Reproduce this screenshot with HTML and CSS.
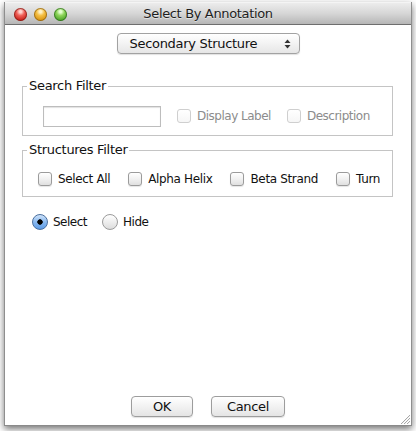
FILE: index.html
```html
<!DOCTYPE html>
<html>
<head>
<meta charset="utf-8">
<link rel="stylesheet" href="styles.css">
</head>
<body>
<div class="window">
  <div class="titlebar">
    <div class="lights">
      <span class="light red"></span>
      <span class="light yellow"></span>
      <span class="light green"></span>
    </div>
    <div class="title">Select By Annotation</div>
  </div>
  <div class="content">
    <div class="popup-row">
      <div class="popup">
        <span class="popup-text">Secondary Structure</span>
        <svg class="popup-arrows" width="7" height="10" viewBox="0 0 7 10">
          <path d="M3.5 0.5 L6.5 4 L0.5 4 Z" fill="#333"/>
          <path d="M0.5 6 L6.5 6 L3.5 9.5 Z" fill="#333"/>
        </svg>
      </div>
    </div>

    <fieldset class="group search">
      <legend>Search Filter</legend>
      <div class="row search-row">
        <div class="textfield"></div>
        <label class="check disabled"><span class="box"></span><span>Display Label</span></label>
        <label class="check disabled"><span class="box"></span><span>Description</span></label>
      </div>
    </fieldset>

    <fieldset class="group structures">
      <legend>Structures Filter</legend>
      <div class="row struct-row">
        <label class="check"><span class="box"></span><span>Select All</span></label>
        <label class="check"><span class="box"></span><span>Alpha Helix</span></label>
        <label class="check"><span class="box"></span><span>Beta Strand</span></label>
        <label class="check"><span class="box"></span><span>Turn</span></label>
      </div>
    </fieldset>

    <div class="row radios">
      <label class="radio on"><span class="dot"></span><span>Select</span></label>
      <label class="radio"><span class="dot"></span><span>Hide</span></label>
    </div>

    <div class="spacer"></div>

    <div class="buttons">
      <div class="btn ok">OK</div>
      <div class="btn cancel">Cancel</div>
    </div>

    <svg class="grip" width="11" height="11" viewBox="0 0 11 11">
      <path d="M10 1 L1 10 M10 4 L4 10 M10 7 L7 10" stroke="#a8a8a8" stroke-width="1"/>
      <path d="M10 2 L2 10 M10 5 L5 10 M10 8 L8 10" stroke="#f4f4f4" stroke-width="1"/>
    </svg>
  </div>
</div>
</body>
</html>
```

FILE: styles.css
```css
* { box-sizing: border-box; }
html, body {
  margin: 0;
  padding: 0;
  background: #ffffff;
  width: 416px;
  height: 431px;
  overflow: hidden;
}
body {
  font-family: "DejaVu Sans", "Liberation Sans", sans-serif;
  font-size: 12px;
  color: #111;
}
.window {
  margin: 2px 0 0 4px;
  width: 408px;
  height: 424px;
  display: flex;
  flex-direction: column;
  border-left: 1px solid #8e8e8e;
  border-right: 1px solid #8e8e8e;
  border-bottom: 1px solid #8a8a8a;
  box-shadow: 0 3px 7px rgba(0,0,0,0.55);
  background: #fff;
}
.titlebar {
  height: 23px;
  flex: none;
  display: flex;
  align-items: center;
  position: relative;
  background: linear-gradient(#ececec, #d6d6d6 50%, #b6b6b6);
  border-top: 1px solid #f4f4f4;
  border-bottom: 1px solid #6e6e6e;
}
.lights {
  display: flex;
  gap: 7px;
  padding-left: 9px;
  padding-top: 1px;
}
.light {
  width: 13px;
  height: 13px;
  border-radius: 50%;
  display: block;
}
.red {
  background: radial-gradient(circle at 50% 28%, #ffd4cf 0 10%, #f0625a 35%, #c8221a 75%, #9e1a14);
  box-shadow: inset 0 0 0 1px rgba(110,20,15,0.6);
}
.yellow {
  background: radial-gradient(circle at 50% 28%, #fff1c4 0 10%, #f5c044 35%, #d99512 75%, #a86f0a);
  box-shadow: inset 0 0 0 1px rgba(120,80,10,0.6);
}
.green {
  background: radial-gradient(circle at 50% 28%, #e4ffd0 0 10%, #8ed55a 35%, #4fa52a 75%, #367a1b);
  box-shadow: inset 0 0 0 1px rgba(30,90,20,0.6);
}
.title {
  position: absolute;
  left: 0;
  right: 0;
  top: 3px;
  text-align: center;
  font-size: 13px;
  letter-spacing: -0.35px;
  color: #1e1e1e;
  text-shadow: 0 1px 0 rgba(255,255,255,0.5);
}
.content {
  flex: 1;
  display: flex;
  flex-direction: column;
  position: relative;
}
.popup-row {
  display: flex;
  justify-content: center;
  margin-top: 8px;
}
.popup {
  width: 183px;
  height: 21px;
  border: 1px solid #a2a2a2;
  border-radius: 4px;
  background: linear-gradient(#ffffff, #f3f3f3 50%, #e6e6e6);
  display: flex;
  align-items: center;
  padding: 0 8px 0 12px;
  box-shadow: 0 1px 1px rgba(0,0,0,0.12);
}
.popup-text {
  flex: 1;
  font-size: 13px;
  letter-spacing: -0.3px;
}
.popup-arrows { display: block; }

.group {
  margin: 0 18px 0 17px;
  padding: 0;
  border: 1px solid #c4c4c4;
  min-width: 0;
}
.group legend {
  margin-left: 4px;
  padding: 0 2px;
  font-size: 13px;
  line-height: 16px;
  letter-spacing: -0.3px;
  color: #111;
}
.search { margin-top: 24px; }
.structures { margin-top: 6px; }
.row {
  display: flex;
  align-items: center;
  height: 22px;
}
.search-row {
  padding: 0 0 0 20px;
  margin: 11px 0 8px;
  gap: 16px;
}
.struct-row {
  padding-left: 15px;
  margin: 10px 0 6px;
  gap: 18px;
}
.struct-row .check { letter-spacing: -0.35px; }
.textfield {
  width: 118px;
  height: 21px;
  border: 1px solid #bdbdbd;
  box-shadow: inset 0 1px 1px rgba(0,0,0,0.12);
  background: #fff;
}
.check, .radio {
  display: flex;
  align-items: center;
  gap: 6px;
  font-size: 12px;
  letter-spacing: -0.5px;
}
.box {
  width: 14px;
  height: 14px;
  border: 1px solid #9b9b9b;
  border-radius: 3px;
  background: linear-gradient(#ffffff, #f1f1f1 50%, #e0e0e0);
  box-shadow: 0 1px 1px rgba(0,0,0,0.1);
  display: block;
}
.check.disabled { color: #8c8c8c; }
.check.disabled .box {
  border-color: #cfcfcf;
  background: linear-gradient(#ffffff, #f6f6f6);
  box-shadow: none;
}
.radios {
  margin: 14px 0 0 27px;
  gap: 15px;
}
.radio { gap: 5px; }
.dot {
  width: 16px;
  height: 16px;
  border-radius: 50%;
  border: 1px solid #9b9b9b;
  background: linear-gradient(#ffffff, #eeeeee 50%, #dcdcdc);
  display: flex;
  align-items: center;
  justify-content: center;
}
.radio.on .dot {
  border-color: #4a6f9e;
  background: radial-gradient(circle at 50% 50%, #000 0 2.4px, transparent 3px),
              linear-gradient(#cfe3fa, #8ab9ef 50%, #5c9be6);
}
.spacer { flex: 1; }
.buttons {
  display: flex;
  justify-content: center;
  gap: 18px;
  margin-bottom: 8px;
}
.btn {
  height: 21px;
  border: 1px solid #9d9d9d;
  border-radius: 4px;
  background: linear-gradient(#ffffff, #f2f2f2 50%, #e4e4e4);
  box-shadow: 0 1px 1px rgba(0,0,0,0.12);
  display: flex;
  align-items: center;
  justify-content: center;
  font-size: 13px;
  letter-spacing: -0.3px;
}
.ok { width: 62px; }
.cancel { width: 74px; }
.grip {
  position: absolute;
  right: 0;
  bottom: 0;
}
```
